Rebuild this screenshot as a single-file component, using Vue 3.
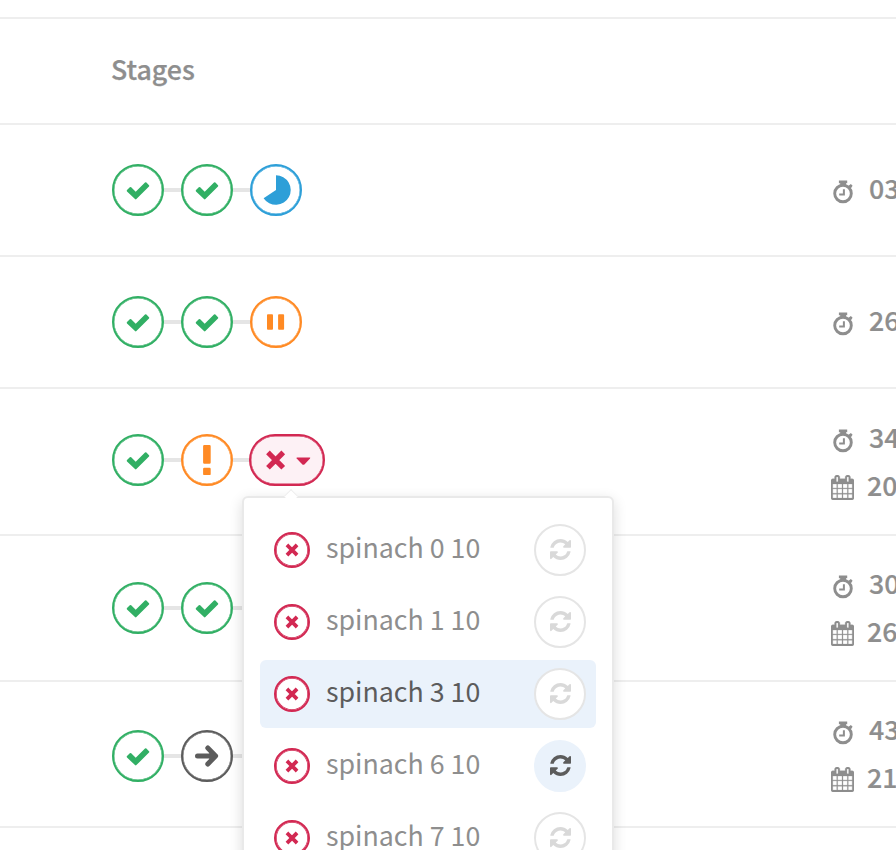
<script setup>
const rows = [
  { size: 'short', stages: ['success', 'success', 'running'], time: '03' },
  { size: 'short', stages: ['success', 'success', 'paused'], time: '26' },
  { size: 'tall first', stages: ['success', 'warning', 'failed'], time: '34', date: '20' },
  { size: 'tall', stages: ['success', 'success', 'hidden'], time: '30', date: '26' },
  { size: 'tall last', stages: ['success', 'skipped', 'hidden'], time: '43', date: '21' },
]
const jobs = [
  { name: 'spinach 0 10' },
  { name: 'spinach 1 10' },
  { name: 'spinach 3 10', state: 'active' },
  { name: 'spinach 6 10', state: 'retrying' },
  { name: 'spinach 7 10' },
]
</script>

<template>
  <main class="page">
    <div class="topline"></div>
    <header class="head">Stages</header>
    <section v-for="(row, i) in rows" :key="i" class="row" :class="row.size">
      <div class="stages">
        <template v-for="(s, j) in row.stages" :key="j">
          <span v-if="j" class="link"></span>
          <span class="stage" :class="s">
            <svg v-if="s === 'failed'" class="pill-icon" viewBox="0 0 76 52">
              <path class="cross" d="M20.8 20.3l11.6 11.6m0-11.6l-11.6 11.6" />
              <path d="M48.2 23.4h12.4q1.2 0 .4 1l-5.6 6q-1 .9-2 0l-5.7-6q-.7-1 .5-1z" />
            </svg>
            <svg v-else viewBox="0 0 52 52">
              <path v-if="s === 'success'" d="M15 26.1l2.8-2.8q.7-.6 1.4 0l4.5 4.5 9.3-9.3q.7-.6 1.4 0l2.6 2.7q.6.7 0 1.4L24.4 35.1q-.7.7-1.4 0l-8-7.7q-.6-.6 0-1.3z" />
              <path v-else-if="s === 'running'" d="M26 11.2a14.8 14.8 0 1 1-12.400 23L26 26z" />
              <path v-else-if="s === 'paused'" d="M17.900 18.300h4.200q.9 0 .9.9v13.600q0 .9-.9.9h-4.200q-.9 0-.9-.9V19.200q0-.9.9-.9zm11.100 0h4.200q.9 0 .9.9v13.600q0 .9-.9.9h-4.200q-.9 0-.9-.9V19.200q0-.9.9-.9z" />
              <path v-else-if="s === 'warning'" d="M23.300 11h5.200q1.200 0 1.200 1.200v16.300q0 1.200-1.200 1.200h-5.200q-1.200 0-1.200-1.200V12.200q0-1.200 1.200-1.200zm0 22.700h5.200q1.200 0 1.200 1.200v5q0 1.200-1.200 1.200h-5.200q-1.200 0-1.200-1.200v-5q0-1.200 1.200-1.200z" />
              <template v-else-if="s === 'skipped'">
                <path class="arrow" d="M16.500 26H34M26.800 18l7.800 8-7.800 8" />
                <path d="M28.500 20l6 6-6 6z" />
              </template>
            </svg>
          </span>
        </template>
      </div>
      <div class="meta">
        <div class="line time">
          <svg viewBox="0 0 24 24">
            <circle cx="12" cy="13.500" r="8.300" />
            <path class="solid" d="M7.900.6h8.300v2.600h-1.200v2.400H9.200V3.200H7.900zM17.200 6l2.700-2 1.700 1.800-1.800 2.600z" />
            <path class="hand" d="M12.900 9.200v5.200H8.200" />
          </svg>
          <span>{{ row.time }}</span>
        </div>
        <div v-if="row.date" class="line date">
          <svg viewBox="64 0 1664 1792">
            <path class="solid" d="M192 1664h288v-288h-288v288zm352 0h320v-288h-320v288zm-352-352h288v-320h-288v320zm352 0h320v-320h-320v320zm-352-384h288v-288h-288v288zm736 736h320v-288h-320v288zm-384-736h320v-288h-320v288zm768 736h288v-288h-288v288zm-384-352h320v-320h-320v320zm-352-864v-288q0-13-9.500-22.500t-22.500-9.500h-64q-13 0-22.500 9.500t-9.500 22.500v288q0 13 9.500 22.500t22.500 9.500h64q13 0 22.500-9.500t9.500-22.500zm736 864h288v-320h-288v320zm-384-384h320v-288h-320v288zm384 0h288v-288h-288v288zm32-480v-288q0-13-9.500-22.500t-22.500-9.500h-64q-13 0-22.500 9.500t-9.500 22.500v288q0 13 9.500 22.500t22.500 9.500h64q13 0 22.500-9.500t9.500-22.500zm384-64v1280q0 52-38 90t-90 38h-1408q-52 0-90-38t-38-90v-1280q0-52 38-90t90-38h128v-96q0-66 47-113t113-47h64q66 0 113 47t47 113v96h384v-96q0-66 47-113t113-47h64q66 0 113 47t47 113v96h128q52 0 90 38t38 90z" />
          </svg>
          <span>{{ row.date }}</span>
        </div>
      </div>
    </section>

    <div class="menu">
      <div class="tip"></div>
      <div v-for="job in jobs" :key="job.name" class="job" :class="job.state">
        <span class="badge">
          <svg viewBox="0 0 36 36"><path d="M14.300 14.300l7.400 7.400m0-7.400l-7.400 7.400" /></svg>
        </span>
        <span class="name">{{ job.name }}</span>
        <span class="retry">
          <svg viewBox="128 128 1536 1536">
            <path d="M1639 1056q0 5-1 7-64 268-268 434.500t-478 166.500q-146 0-282.500-55t-243.500-157l-129 129q-19 19-45 19t-45-19-19-45v-448q0-26 19-45t45-19h448q26 0 45 19t19 45-19 45l-137 137q71 66 161 102t187 36q134 0 250-65t186-179q11-17 53-117 8-23 30-23h192q13 0 22.500 9.500t9.500 22.500zm25-800v448q0 26-19 45t-45 19h-448q-26 0-45-19t-19-45 19-45l138-138q-148-137-349-137-134 0-250 65t-186 179q-11 17-53 117-8 23-30 23h-199q-13 0-22.500-9.500t-9.500-22.500v-7q65-268 270-434.500t480-166.500q146 0 284 55.500t245 156.500l130-129q19-19 45-19t45 19 19 45z" />
          </svg>
        </span>
      </div>
    </div>
  </main>
</template>

<style>
body { background: #fff; }
</style>

<style scoped>
* { box-sizing: border-box; }
.page {
  position: relative;
  width: 896px;
  height: 850px;
  overflow: hidden;
  background: #fff;
  color: #8e8e8e;
  font-family: "Noto Sans CJK SC", sans-serif;
  font-size: 26.75px;
}
svg { display: block; fill: currentColor; }
.topline { height: 19px; border-bottom: 2px solid #eee; }
.head {
  height: 106px;
  padding-left: 111px;
  border-bottom: 2px solid #eee;
  font-weight: 500;
  -webkit-text-stroke: 0.25px currentColor;
  line-height: 100px;
}
.row {
  display: flex;
  justify-content: space-between;
  border-bottom: 2px solid #eee;
  padding-left: 112px;
}
.short { height: 132px; padding-top: 39px; }
.tall { height: 146px; padding-top: 46px; }
.first { height: 147px; padding-top: 45px; }
.last { padding-top: 48px; }
.stages { display: flex; height: 52px; align-items: center; }
.link { width: 17px; height: 4px; background: #e5e5e5; }
.stage {
  width: 52px;
  height: 52px;
  border: 2px solid;
  border-radius: 26px;
  box-shadow: inset 0 0 0 0.4px currentColor;
}
.stage svg { width: 52px; height: 52px; margin: -2px; }
.success { color: #31af64; }
.running { color: #2d9fd8; }
.paused, .warning { color: #ff8a24; }
.skipped { color: #5c5c5c; }
.hidden { visibility: hidden; }
.failed { width: 76px; margin-left: -1px; color: #d22852; background: #fdf1f5; }
.stage .pill-icon { width: 76px; }
.cross { fill: none; stroke: currentColor; stroke-width: 5.2; stroke-linecap: square; }
.arrow { fill: none; stroke: currentColor; stroke-width: 5; stroke-linecap: round; stroke-linejoin: round; }
.meta { width: 65px; white-space: nowrap; font-weight: 500; -webkit-text-stroke: 0.2px currentColor; }
.line { display: flex; align-items: center; height: 48px; line-height: 48px; }
.short .meta { padding-top: 2px; }
.tall .meta { margin-top: -21px; }
.first .meta { margin-top: -19px; }
.last .meta { margin-top: -23px; }
.line span { position: relative; top: -2px; }
.time svg { width: 24px; height: 24px; margin: 3px 14px 0 0; flex: none; fill: none; stroke: currentColor; stroke-width: 2.9; }
.time svg .hand { stroke-width: 2; }
.time .solid { fill: currentColor; stroke: none; }
.date svg { width: 23px; height: 25px; margin: 0 13px 0 0; flex: none; stroke: currentColor; stroke-width: 20; }
.menu {
  position: absolute;
  left: 242px;
  top: 496px;
  width: 372px;
  height: 390px;
  padding: 18px 16px;
  background: #fff;
  border: 2px solid #e9e9e9;
  border-radius: 6px;
  box-shadow: 0 4px 14px rgba(0, 0, 0, 0.14);
}
.tip {
  position: absolute;
  left: 42px;
  top: -7px;
  width: 10px;
  height: 10px;
  background: #fff;
  border: solid #eee;
  border-width: 1px 0 0 1px;
  transform: rotate(45deg);
}
.job {
  display: flex;
  align-items: center;
  height: 68px;
  margin-bottom: 4px;
  padding: 0 10px 0 14px;
  border-radius: 6px;
}
.badge {
  width: 36px;
  height: 36px;
  border: 2px solid #d22852;
  border-radius: 50%;
  box-shadow: inset 0 0 0 0.7px #d22852;
  background: #fff;
  color: #d22852;
}
.badge svg { width: 36px; height: 36px; margin: -2px; fill: none; stroke: currentColor; stroke-width: 3.8; stroke-linecap: square; }
.name { flex: 1; margin: -7px 0 0 16px; line-height: 48px; white-space: nowrap; }
.retry {
  display: grid;
  place-items: center;
  width: 52px;
  height: 52px;
  border: 2px solid #e5e5e5;
  border-radius: 50%;
  background: #fff;
  color: #d9d9d9;
}
.retry svg { width: 21px; height: 21px; margin-top: -1px; }
.active { background: #eaf2fb; color: #5c5c5c; }
.retrying .retry { background: #eaf2fb; border-color: #eaf2fb; color: #5c5c5c; }
</style>
